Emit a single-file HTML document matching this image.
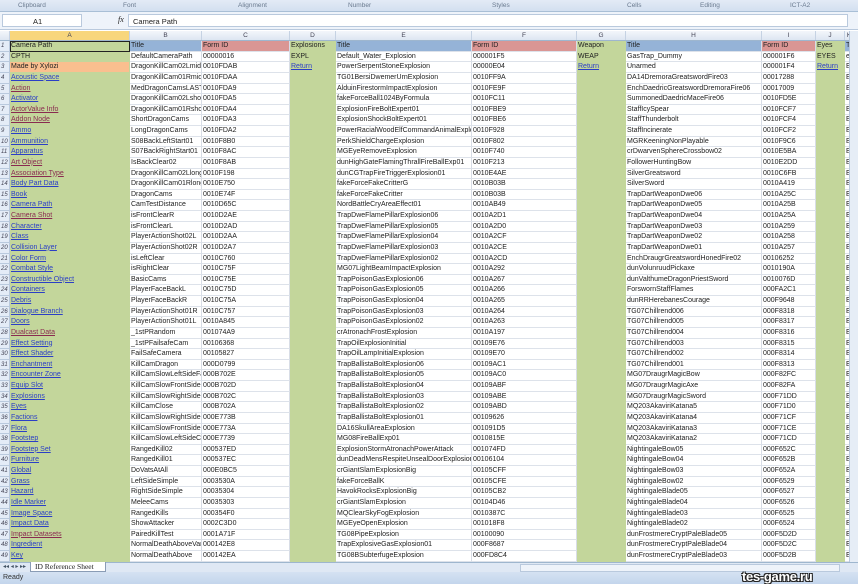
<!DOCTYPE html>
<html><head><meta charset="utf-8"><style>
*{margin:0;padding:0;box-sizing:border-box}
body{width:858px;height:584px;overflow:hidden;background:#fff;font-family:"Liberation Sans",sans-serif;font-size:7px;color:#222;position:relative}
#rib{position:absolute;left:0;top:0;width:858px;height:12px;background:linear-gradient(#e3ebf6,#d3e0f0);border-bottom:1px solid #a9bfd6;color:#6a7a8f;font-size:6.5px}
#rib span{position:absolute;top:2px}
#fb{position:absolute;left:0;top:12px;width:858px;height:18px;background:#eef3fa;border-bottom:1px solid #b9c9dd}
#nb{position:absolute;left:2px;top:2px;width:80px;height:13px;background:#fff;border:1px solid #b9c9dd;font-size:7.5px;padding:2px 0 0 30px}
#fx{position:absolute;left:118px;top:3px;font-style:italic;font-family:"Liberation Serif",serif;font-size:8px}
#fi{position:absolute;left:128px;top:2px;width:720px;height:13px;background:#fff;border:1px solid #b9c9dd;font-size:7.5px;padding:2px 0 0 4px}
#ch{position:absolute;left:0;top:31px;height:10px;width:858px;background:linear-gradient(#f3f6fb,#dde6f2);border-bottom:1px solid #9eb6ce;display:flex}
#ch b{font-weight:normal;text-align:center;border-right:1px solid #c5d2e3;color:#445;font-size:6.5px;line-height:9px;height:9px}
#g{position:absolute;left:0;top:41px;width:849px}
.r{height:10.63px;display:flex;line-height:10px}
.r>*{height:10.63px;overflow:hidden;white-space:nowrap;padding-left:1px;border-right:1px solid #d8dde6;border-bottom:1px solid #dde2ea;flex:none}
.h{width:10px;background:#e4ecf7;color:#445;font-size:6px;text-align:left;border-color:#b9c9dd!important}
.a{width:120px;background:#c3d69b;border-color:#c3d69b!important}
.b{width:72px}.c{width:88px}.d{width:46px;background:#c3d69b;border-color:#c3d69b!important}
.e{width:136px}.f{width:105px}.gg{width:49px;background:#c3d69b;border-color:#c3d69b!important}
.hh{width:136px}.i{width:54px}.j{width:29px;background:#c3d69b;border-color:#c3d69b!important}.k{width:9px;background:#fff}
.L{color:#2b3fc6;text-decoration:underline}.V{color:#8a2b50;text-decoration:underline}
.bl{background:#95b3d7!important}.rd{background:#da9694!important}.or{background:#fabf8f!important}
#vs{position:absolute;left:849px;top:31px;width:9px;height:531px;background:#e6edf6;border-left:1px solid #b9c9dd}
#tabs{position:absolute;left:0;top:562px;width:858px;height:10px;background:#dfe8f4;border-top:1px solid #9eb6ce}
#tab{position:absolute;left:30px;top:-1px;height:10px;width:76px;background:#fff;border:1px solid #8a9cb5;border-top:none;font-family:"Liberation Serif",serif;font-size:7.5px;padding-left:4px;line-height:9px}
#hs{position:absolute;left:520px;top:1px;width:320px;height:8px;background:#eef3fa;border:1px solid #b9c9dd}
#st{position:absolute;left:0;top:572px;width:858px;height:12px;background:linear-gradient(#d5e2f2,#c3d5ec);font-size:7px;color:#333;padding:2px 0 0 3px}
#wm{position:absolute;left:742px;top:569px;font-size:13px;font-weight:bold;color:#fff;text-shadow:1px 1px 0 #222,-1px -1px 0 #222,1px -1px 0 #222,-1px 1px 0 #222;letter-spacing:-.3px}
</style></head><body>
<div id="rib"><span style="left:18px">Clipboard</span><span style="left:123px">Font</span><span style="left:238px">Alignment</span><span style="left:348px">Number</span><span style="left:492px">Styles</span><span style="left:627px">Cells</span><span style="left:700px">Editing</span><span style="left:790px">ICT-A2</span></div>
<div id="fb"><div id="nb">A1</div><div id="fx">fx</div><div id="fi">Camera Path</div></div>
<div id="ch"><b style="width:10px"></b><b style="width:120px;background:#f8d67c">A</b><b style="width:72px">B</b><b style="width:88px">C</b><b style="width:46px">D</b><b style="width:136px">E</b><b style="width:105px">F</b><b style="width:49px">G</b><b style="width:136px">H</b><b style="width:54px">I</b><b style="width:29px">J</b><b style="width:9px">K</b></div>
<div id="g">
<div class="r"><i class="h">1</i><span class="a" style="outline:1.5px solid #222;outline-offset:-1px">Camera Path</span><span class="b bl">Title</span><span class="c rd">Form ID</span><span class="d">Explosions</span><span class="e bl">Title</span><span class="f rd">Form ID</span><span class="gg">Weapon</span><span class="hh bl">Title</span><span class="i rd">Form ID</span><span class="j">Eyes</span><span class="k bl">Ti</span></div>
<div class="r"><i class="h">2</i><span class="a">CPTH</span><span class="b">DefaultCameraPath</span><span class="c">00000016</span><span class="d">EXPL</span><span class="e">Default_Water_Explosion</span><span class="f">000001F5</span><span class="gg">WEAP</span><span class="hh">GasTrap_Dummy</span><span class="i">000001F6</span><span class="j">EYES</span><span class="k">e</span></div>
<div class="r"><i class="h">3</i><span class="a or">Made by Xylozi</span><span class="b">DragonKillCam02Lmid</span><span class="c">0010FDAB</span><span class="d"><u class="L">Return</u></span><span class="e">PowerSerpentStoneExplosion</span><span class="f">00000E04</span><span class="gg"><u class="L">Return</u></span><span class="hh">Unarmed</span><span class="i">000001F4</span><span class="j"><u class="L">Return</u></span><span class="k">E</span></div>
<div class="r"><i class="h">4</i><span class="a"><u class="L">Acoustic Space</u></span><span class="b">DragonKillCam01Rmid</span><span class="c">0010FDAA</span><span class="d"></span><span class="e">TG01BersiDwemerUrnExplosion</span><span class="f">0010FF9A</span><span class="gg"></span><span class="hh">DA14DremoraGreatswordFire03</span><span class="i">00017288</span><span class="j"></span><span class="k">E</span></div>
<div class="r"><i class="h">5</i><span class="a"><u class="V">Action</u></span><span class="b">MedDragonCamsLAST</span><span class="c">0010FDA9</span><span class="d"></span><span class="e">AlduinFirestormImpactExplosion</span><span class="f">0010FE9F</span><span class="gg"></span><span class="hh">EnchDaedricGreatswordDremoraFire06</span><span class="i">00017009</span><span class="j"></span><span class="k">E</span></div>
<div class="r"><i class="h">6</i><span class="a"><u class="L">Activator</u></span><span class="b">DragonKillCam02Lshort</span><span class="c">0010FDA5</span><span class="d"></span><span class="e">fakeForceBall1024ByFormula</span><span class="f">0010FC11</span><span class="gg"></span><span class="hh">SummonedDaedricMaceFire06</span><span class="i">0010FD5E</span><span class="j"></span><span class="k">E</span></div>
<div class="r"><i class="h">7</i><span class="a"><u class="V">ActorValue Info</u></span><span class="b">DragonKillCam01Rshort</span><span class="c">0010FDA4</span><span class="d"></span><span class="e">ExplosionFireBoltExpert01</span><span class="f">0010FBE9</span><span class="gg"></span><span class="hh">StaffIcySpear</span><span class="i">0010FCF7</span><span class="j"></span><span class="k">E</span></div>
<div class="r"><i class="h">8</i><span class="a"><u class="V">Addon Node</u></span><span class="b">ShortDragonCams</span><span class="c">0010FDA3</span><span class="d"></span><span class="e">ExplosionShockBoltExpert01</span><span class="f">0010FBE6</span><span class="gg"></span><span class="hh">StaffThunderbolt</span><span class="i">0010FCF4</span><span class="j"></span><span class="k">E</span></div>
<div class="r"><i class="h">9</i><span class="a"><u class="L">Ammo</u></span><span class="b">LongDragonCams</span><span class="c">0010FDA2</span><span class="d"></span><span class="e">PowerRacialWoodElfCommandAnimalExplosion</span><span class="f">0010F928</span><span class="gg"></span><span class="hh">StaffIncinerate</span><span class="i">0010FCF2</span><span class="j"></span><span class="k">E</span></div>
<div class="r"><i class="h">10</i><span class="a"><u class="L">Ammunition</u></span><span class="b">S08BackLeftStart01</span><span class="c">0010F8B0</span><span class="d"></span><span class="e">PerkShieldChargeExplosion</span><span class="f">0010F802</span><span class="gg"></span><span class="hh">MGRKeeningNonPlayable</span><span class="i">0010F9C6</span><span class="j"></span><span class="k">E</span></div>
<div class="r"><i class="h">11</i><span class="a"><u class="L">Apparatus</u></span><span class="b">S07BackRightStart01</span><span class="c">0010F8AC</span><span class="d"></span><span class="e">MGEyeRemoveExplosion</span><span class="f">0010F740</span><span class="gg"></span><span class="hh">crDwarvenSphereCrossbow02</span><span class="i">0010E5BA</span><span class="j"></span><span class="k">E</span></div>
<div class="r"><i class="h">12</i><span class="a"><u class="V">Art Object</u></span><span class="b">IsBackClear02</span><span class="c">0010F8AB</span><span class="d"></span><span class="e">dunHighGateFlamingThrallFireBallExp01</span><span class="f">0010F213</span><span class="gg"></span><span class="hh">FollowerHuntingBow</span><span class="i">0010E2DD</span><span class="j"></span><span class="k">E</span></div>
<div class="r"><i class="h">13</i><span class="a"><u class="V">Association Type</u></span><span class="b">DragonKillCam02Llong</span><span class="c">0010F198</span><span class="d"></span><span class="e">dunCGTrapFireTriggerExplosion01</span><span class="f">0010E4AE</span><span class="gg"></span><span class="hh">SilverGreatsword</span><span class="i">0010C6FB</span><span class="j"></span><span class="k">E</span></div>
<div class="r"><i class="h">14</i><span class="a"><u class="L">Body Part Data</u></span><span class="b">DragonKillCam01Rlong</span><span class="c">0010E750</span><span class="d"></span><span class="e">fakeForceFakeCritterG</span><span class="f">0010B03B</span><span class="gg"></span><span class="hh">SilverSword</span><span class="i">0010A419</span><span class="j"></span><span class="k">E</span></div>
<div class="r"><i class="h">15</i><span class="a"><u class="L">Book</u></span><span class="b">DragonCams</span><span class="c">0010E74F</span><span class="d"></span><span class="e">fakeForceFakeCritter</span><span class="f">0010B03B</span><span class="gg"></span><span class="hh">TrapDartWeaponDwe06</span><span class="i">0010A25C</span><span class="j"></span><span class="k">E</span></div>
<div class="r"><i class="h">16</i><span class="a"><u class="L">Camera Path</u></span><span class="b">CamTestDistance</span><span class="c">0010D65C</span><span class="d"></span><span class="e">NordBattleCryAreaEffect01</span><span class="f">0010AB49</span><span class="gg"></span><span class="hh">TrapDartWeaponDwe05</span><span class="i">0010A25B</span><span class="j"></span><span class="k">E</span></div>
<div class="r"><i class="h">17</i><span class="a"><u class="V">Camera Shot</u></span><span class="b">isFrontClearR</span><span class="c">0010D2AE</span><span class="d"></span><span class="e">TrapDweFlamePillarExplosion06</span><span class="f">0010A2D1</span><span class="gg"></span><span class="hh">TrapDartWeaponDwe04</span><span class="i">0010A25A</span><span class="j"></span><span class="k">E</span></div>
<div class="r"><i class="h">18</i><span class="a"><u class="L">Character</u></span><span class="b">isFrontClearL</span><span class="c">0010D2AD</span><span class="d"></span><span class="e">TrapDweFlamePillarExplosion05</span><span class="f">0010A2D0</span><span class="gg"></span><span class="hh">TrapDartWeaponDwe03</span><span class="i">0010A259</span><span class="j"></span><span class="k">E</span></div>
<div class="r"><i class="h">19</i><span class="a"><u class="L">Class</u></span><span class="b">PlayerActionShot02L</span><span class="c">0010D2AA</span><span class="d"></span><span class="e">TrapDweFlamePillarExplosion04</span><span class="f">0010A2CF</span><span class="gg"></span><span class="hh">TrapDartWeaponDwe02</span><span class="i">0010A258</span><span class="j"></span><span class="k">E</span></div>
<div class="r"><i class="h">20</i><span class="a"><u class="L">Collision Layer</u></span><span class="b">PlayerActionShot02R</span><span class="c">0010D2A7</span><span class="d"></span><span class="e">TrapDweFlamePillarExplosion03</span><span class="f">0010A2CE</span><span class="gg"></span><span class="hh">TrapDartWeaponDwe01</span><span class="i">0010A257</span><span class="j"></span><span class="k">E</span></div>
<div class="r"><i class="h">21</i><span class="a"><u class="L">Color Form</u></span><span class="b">isLeftClear</span><span class="c">0010C760</span><span class="d"></span><span class="e">TrapDweFlamePillarExplosion02</span><span class="f">0010A2CD</span><span class="gg"></span><span class="hh">EnchDraugrGreatswordHonedFire02</span><span class="i">00106252</span><span class="j"></span><span class="k">E</span></div>
<div class="r"><i class="h">22</i><span class="a"><u class="L">Combat Style</u></span><span class="b">isRightClear</span><span class="c">0010C75F</span><span class="d"></span><span class="e">MG07LightBeamImpactExplosion</span><span class="f">0010A292</span><span class="gg"></span><span class="hh">dunVolunruudPickaxe</span><span class="i">0010190A</span><span class="j"></span><span class="k">E</span></div>
<div class="r"><i class="h">23</i><span class="a"><u class="L">Constructible Object</u></span><span class="b">BasicCams</span><span class="c">0010C75E</span><span class="d"></span><span class="e">TrapPoisonGasExplosion06</span><span class="f">0010A267</span><span class="gg"></span><span class="hh">dunValthumeDragonPriestSword</span><span class="i">0010076D</span><span class="j"></span><span class="k">E</span></div>
<div class="r"><i class="h">24</i><span class="a"><u class="L">Containers</u></span><span class="b">PlayerFaceBackL</span><span class="c">0010C75D</span><span class="d"></span><span class="e">TrapPoisonGasExplosion05</span><span class="f">0010A266</span><span class="gg"></span><span class="hh">ForswornStaffFlames</span><span class="i">000FA2C1</span><span class="j"></span><span class="k">E</span></div>
<div class="r"><i class="h">25</i><span class="a"><u class="L">Debris</u></span><span class="b">PlayerFaceBackR</span><span class="c">0010C75A</span><span class="d"></span><span class="e">TrapPoisonGasExplosion04</span><span class="f">0010A265</span><span class="gg"></span><span class="hh">dunRRHerebanesCourage</span><span class="i">000F9648</span><span class="j"></span><span class="k">E</span></div>
<div class="r"><i class="h">26</i><span class="a"><u class="L">Dialogue Branch</u></span><span class="b">PlayerActionShot01R</span><span class="c">0010C757</span><span class="d"></span><span class="e">TrapPoisonGasExplosion03</span><span class="f">0010A264</span><span class="gg"></span><span class="hh">TG07Chillrend006</span><span class="i">000F8318</span><span class="j"></span><span class="k">E</span></div>
<div class="r"><i class="h">27</i><span class="a"><u class="L">Doors</u></span><span class="b">PlayerActionShot01L</span><span class="c">0010A845</span><span class="d"></span><span class="e">TrapPoisonGasExplosion02</span><span class="f">0010A263</span><span class="gg"></span><span class="hh">TG07Chillrend005</span><span class="i">000F8317</span><span class="j"></span><span class="k">E</span></div>
<div class="r"><i class="h">28</i><span class="a"><u class="V">Dualcast Data</u></span><span class="b">_1stPRandom</span><span class="c">001074A9</span><span class="d"></span><span class="e">crAtronachFrostExplosion</span><span class="f">0010A197</span><span class="gg"></span><span class="hh">TG07Chillrend004</span><span class="i">000F8316</span><span class="j"></span><span class="k">E</span></div>
<div class="r"><i class="h">29</i><span class="a"><u class="L">Effect Setting</u></span><span class="b">_1stPFailsafeCam</span><span class="c">00106368</span><span class="d"></span><span class="e">TrapOilExplosionInitial</span><span class="f">00109E76</span><span class="gg"></span><span class="hh">TG07Chillrend003</span><span class="i">000F8315</span><span class="j"></span><span class="k">E</span></div>
<div class="r"><i class="h">30</i><span class="a"><u class="L">Effect Shader</u></span><span class="b">FailSafeCamera</span><span class="c">00105827</span><span class="d"></span><span class="e">TrapOilLampInitialExplosion</span><span class="f">00109E70</span><span class="gg"></span><span class="hh">TG07Chillrend002</span><span class="i">000F8314</span><span class="j"></span><span class="k">E</span></div>
<div class="r"><i class="h">31</i><span class="a"><u class="L">Enchantment</u></span><span class="b">KillCamDragon</span><span class="c">000D0799</span><span class="d"></span><span class="e">TrapBallistaBoltExplosion06</span><span class="f">00109AC1</span><span class="gg"></span><span class="hh">TG07Chillrend001</span><span class="i">000F8313</span><span class="j"></span><span class="k">E</span></div>
<div class="r"><i class="h">32</i><span class="a"><u class="L">Encounter Zone</u></span><span class="b">KillCamSlowLeftSideFar</span><span class="c">000B702E</span><span class="d"></span><span class="e">TrapBallistaBoltExplosion05</span><span class="f">00109AC0</span><span class="gg"></span><span class="hh">MG07DraugrMagicBow</span><span class="i">000F82FC</span><span class="j"></span><span class="k">E</span></div>
<div class="r"><i class="h">33</i><span class="a"><u class="L">Equip Slot</u></span><span class="b">KillCamSlowFrontSideFar</span><span class="c">000B702D</span><span class="d"></span><span class="e">TrapBallistaBoltExplosion04</span><span class="f">00109ABF</span><span class="gg"></span><span class="hh">MG07DraugrMagicAxe</span><span class="i">000F82FA</span><span class="j"></span><span class="k">E</span></div>
<div class="r"><i class="h">34</i><span class="a"><u class="L">Explosions</u></span><span class="b">KillCamSlowRightSideFar</span><span class="c">000B702C</span><span class="d"></span><span class="e">TrapBallistaBoltExplosion03</span><span class="f">00109ABE</span><span class="gg"></span><span class="hh">MG07DraugrMagicSword</span><span class="i">000F71DD</span><span class="j"></span><span class="k">E</span></div>
<div class="r"><i class="h">35</i><span class="a"><u class="L">Eyes</u></span><span class="b">KillCamClose</span><span class="c">000B702A</span><span class="d"></span><span class="e">TrapBallistaBoltExplosion02</span><span class="f">00109ABD</span><span class="gg"></span><span class="hh">MQ203AkaviriKatana5</span><span class="i">000F71D0</span><span class="j"></span><span class="k">E</span></div>
<div class="r"><i class="h">36</i><span class="a"><u class="L">Factions</u></span><span class="b">KillCamSlowRightSideClose</span><span class="c">000E773B</span><span class="d"></span><span class="e">TrapBallistaBoltExplosion01</span><span class="f">00109626</span><span class="gg"></span><span class="hh">MQ203AkaviriKatana4</span><span class="i">000F71CF</span><span class="j"></span><span class="k">E</span></div>
<div class="r"><i class="h">37</i><span class="a"><u class="L">Flora</u></span><span class="b">KillCamSlowFrontSideClose</span><span class="c">000E773A</span><span class="d"></span><span class="e">DA16SkullAreaExplosion</span><span class="f">001091D5</span><span class="gg"></span><span class="hh">MQ203AkaviriKatana3</span><span class="i">000F71CE</span><span class="j"></span><span class="k">E</span></div>
<div class="r"><i class="h">38</i><span class="a"><u class="L">Footstep</u></span><span class="b">KillCamSlowLeftSideClose</span><span class="c">000E7739</span><span class="d"></span><span class="e">MG08FireBallExp01</span><span class="f">0010815E</span><span class="gg"></span><span class="hh">MQ203AkaviriKatana2</span><span class="i">000F71CD</span><span class="j"></span><span class="k">E</span></div>
<div class="r"><i class="h">39</i><span class="a"><u class="L">Footstep Set</u></span><span class="b">RangedKill02</span><span class="c">000537ED</span><span class="d"></span><span class="e">ExplosionStormAtronachPowerAttack</span><span class="f">001074FD</span><span class="gg"></span><span class="hh">NightingaleBow05</span><span class="i">000F652C</span><span class="j"></span><span class="k">E</span></div>
<div class="r"><i class="h">40</i><span class="a"><u class="L">Furniture</u></span><span class="b">RangedKill01</span><span class="c">000537EC</span><span class="d"></span><span class="e">dunDeadMensRespiteUnsealDoorExplosion</span><span class="f">00106104</span><span class="gg"></span><span class="hh">NightingaleBow04</span><span class="i">000F652B</span><span class="j"></span><span class="k">E</span></div>
<div class="r"><i class="h">41</i><span class="a"><u class="L">Global</u></span><span class="b">DoVatsAtAll</span><span class="c">000E0BC5</span><span class="d"></span><span class="e">crGiantSlamExplosionBig</span><span class="f">00105CFF</span><span class="gg"></span><span class="hh">NightingaleBow03</span><span class="i">000F652A</span><span class="j"></span><span class="k">E</span></div>
<div class="r"><i class="h">42</i><span class="a"><u class="L">Grass</u></span><span class="b">LeftSideSimple</span><span class="c">0003530A</span><span class="d"></span><span class="e">fakeForceBallK</span><span class="f">00105CFE</span><span class="gg"></span><span class="hh">NightingaleBow02</span><span class="i">000F6529</span><span class="j"></span><span class="k">E</span></div>
<div class="r"><i class="h">43</i><span class="a"><u class="L">Hazard</u></span><span class="b">RightSideSimple</span><span class="c">00035304</span><span class="d"></span><span class="e">HavokRocksExplosionBig</span><span class="f">00105CB2</span><span class="gg"></span><span class="hh">NightingaleBlade05</span><span class="i">000F6527</span><span class="j"></span><span class="k">E</span></div>
<div class="r"><i class="h">44</i><span class="a"><u class="L">Idle Marker</u></span><span class="b">MeleeCams</span><span class="c">00035303</span><span class="d"></span><span class="e">crGiantSlamExplosion</span><span class="f">00104D46</span><span class="gg"></span><span class="hh">NightingaleBlade04</span><span class="i">000F6526</span><span class="j"></span><span class="k">E</span></div>
<div class="r"><i class="h">45</i><span class="a"><u class="L">Image Space</u></span><span class="b">RangedKills</span><span class="c">000354F0</span><span class="d"></span><span class="e">MQClearSkyFogExplosion</span><span class="f">0010387C</span><span class="gg"></span><span class="hh">NightingaleBlade03</span><span class="i">000F6525</span><span class="j"></span><span class="k">E</span></div>
<div class="r"><i class="h">46</i><span class="a"><u class="L">Impact Data</u></span><span class="b">ShowAttacker</span><span class="c">0002C3D0</span><span class="d"></span><span class="e">MGEyeOpenExplosion</span><span class="f">001018F8</span><span class="gg"></span><span class="hh">NightingaleBlade02</span><span class="i">000F6524</span><span class="j"></span><span class="k">E</span></div>
<div class="r"><i class="h">47</i><span class="a"><u class="V">Impact Datasets</u></span><span class="b">PairedKillTest</span><span class="c">0001A71F</span><span class="d"></span><span class="e">TG08PipeExplosion</span><span class="f">00100090</span><span class="gg"></span><span class="hh">dunFrostmereCryptPaleBlade05</span><span class="i">000F5D2D</span><span class="j"></span><span class="k">E</span></div>
<div class="r"><i class="h">48</i><span class="a"><u class="L">Ingredient</u></span><span class="b">NormalDeathAboveVari</span><span class="c">000142E8</span><span class="d"></span><span class="e">TrapExplosiveGasExplosion01</span><span class="f">000F8687</span><span class="gg"></span><span class="hh">dunFrostmereCryptPaleBlade04</span><span class="i">000F5D2C</span><span class="j"></span><span class="k">E</span></div>
<div class="r"><i class="h">49</i><span class="a"><u class="L">Key</u></span><span class="b">NormalDeathAbove</span><span class="c">000142EA</span><span class="d"></span><span class="e">TG08BSubterfugeExplosion</span><span class="f">000FD8C4</span><span class="gg"></span><span class="hh">dunFrostmereCryptPaleBlade03</span><span class="i">000F5D2B</span><span class="j"></span><span class="k">E</span></div>
</div>
<div id="vs"></div>
<div id="tabs"><span style="position:absolute;left:3px;top:0;font-size:6px;color:#456">◂◂ ◂ ▸ ▸▸</span><div id="tab">ID Reference Sheet</div><div id="hs"></div></div>
<div id="st">Ready</div>
<div id="wm">tes-game.ru</div>
</body></html>
